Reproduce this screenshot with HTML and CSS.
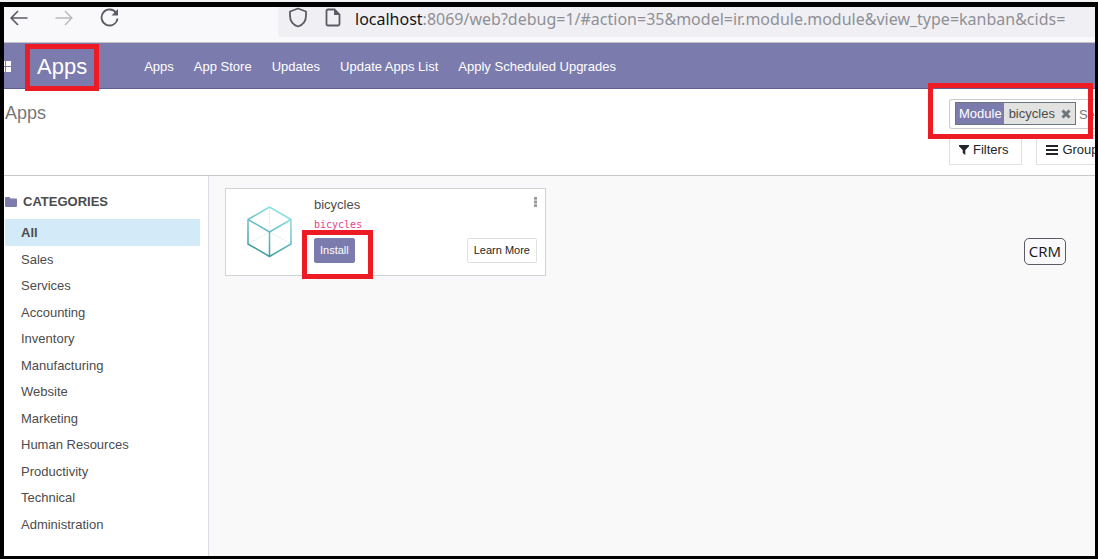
FILE: index.html
```html
<!DOCTYPE html>
<html lang="en">
<head>
<meta charset="utf-8">
<title>Apps</title>
<link rel="stylesheet" href="styles.css">
</head>
<body>
<div class="frame">
  <header class="browser">
    <div class="browser-nav">
      <button class="icon-btn" aria-label="Back"><svg width="18" height="16" viewBox="0 0 18 16"><path d="M17.500 8H1.500M8 1L1.200 8L8 15" fill="none" stroke="#5b5b66" stroke-width="1.700"/></svg></button>
      <button class="icon-btn" aria-label="Forward" disabled><svg width="18" height="16" viewBox="0 0 18 16"><path d="M.5 8H16.500M10 1L16.800 8L10 15" fill="none" stroke="#b9b9be" stroke-width="1.500"/></svg></button>
      <button class="icon-btn reload" aria-label="Reload"><svg width="20" height="20" viewBox="0 0 20 20"><path d="M16.200 5A8 8 0 1 0 17.500 10.500" fill="none" stroke="#5b5b66" stroke-width="1.800"/><path d="M18 1v6.500H11.500z" fill="#5b5b66"/></svg></button>
    </div>
    <div class="address">
      <svg class="shield" width="20" height="21" viewBox="0 0 20 21"><path d="M10 1.500L18 4.500V8.500C18 14 14.500 18 10 19.500C5.500 18 2 14 2 8.500V4.500Z" fill="none" stroke="#5b5b66" stroke-width="1.800" stroke-linejoin="round"/></svg>
      <svg class="doc" width="16" height="19" viewBox="0 0 16 19"><path d="M3 1.500H9.500L14.500 6.500V16Q14.500 17.500 13 17.500H3Q1.500 17.500 1.500 16V3Q1.500 1.500 3 1.500Z" fill="none" stroke="#5b5b66" stroke-width="1.800"/><path d="M9 1V7H15z" fill="#5b5b66"/></svg>
      <span class="url"><b>localhost</b>:8069/web?debug=1/#action=35&amp;model=ir.module.module&amp;view_type=kanban&amp;cids=</span>
    </div>
  </header>

  <nav class="navbar">
    <button class="icon-btn apps-menu" aria-label="Applications"><svg width="8" height="11" viewBox="0 0 8 11"><path d="M0 0H1V5H0zM2 0H7V5H2zM0 6H1V11H0zM2 6H7V11H2z" fill="#fff"/></svg></button>
    <a class="brand" href="#">Apps<span class="mark mark-brand"></span></a>
    <ul class="menu">
      <li><a href="#">Apps</a></li>
      <li><a href="#">App Store</a></li>
      <li><a href="#">Updates</a></li>
      <li><a href="#">Update Apps List</a></li>
      <li><a href="#">Apply Scheduled Upgrades</a></li>
    </ul>
  </nav>

  <section class="control">
    <h1>Apps</h1>
    <div class="tools">
      <div class="search">
        <div class="facet">
          <span class="facet-label">Module</span>
          <span class="facet-value">bicycles</span>
          <button class="icon-btn" aria-label="Remove"><svg width="10" height="10" viewBox="0 0 10 10"><path d="M1.500 1.500L8.500 8.500M8.500 1.500L1.500 8.500" stroke="#6c757d" stroke-width="3"/></svg></button>
        </div>
        <input type="text" placeholder="Search..." aria-label="Search">
        <span class="mark mark-search"></span>
      </div>
      <div class="options">
        <button class="option"><svg width="10" height="10" viewBox="0 0 10 10"><path d="M0 0H10V1.200L6.300 5V10L3.700 8V5L0 1.200z" fill="#212529"/></svg>Filters</button>
        <button class="option"><svg width="12" height="10" viewBox="0 0 12 10"><path d="M0 0H12V2H0zM0 4H12V6H0zM0 8H12V10H0z" fill="#212529"/></svg>Group</button>
      </div>
    </div>
  </section>

  <main class="content">
    <aside class="sidebar">
      <h2><svg width="12" height="10" viewBox="0 0 12 10"><path d="M1 0H4.500L5.500 1.500H11Q12 1.500 12 2.500V9Q12 10 11 10H1Q0 10 0 9V1Q0 0 1 0Z" fill="#7c7bad"/></svg>CATEGORIES</h2>
      <ul class="categories">
        <li class="active"><a href="#">All</a></li>
        <li><a href="#">Sales</a></li>
        <li><a href="#">Services</a></li>
        <li><a href="#">Accounting</a></li>
        <li><a href="#">Inventory</a></li>
        <li><a href="#">Manufacturing</a></li>
        <li><a href="#">Website</a></li>
        <li><a href="#">Marketing</a></li>
        <li><a href="#">Human Resources</a></li>
        <li><a href="#">Productivity</a></li>
        <li><a href="#">Technical</a></li>
        <li><a href="#">Administration</a></li>
      </ul>
    </aside>
    <div class="kanban">
      <article class="card">
        <svg class="cube" width="46" height="52" viewBox="0 0 46 52">
          <defs><linearGradient id="teal" gradientUnits="userSpaceOnUse" x1="34" y1="4" x2="12" y2="48"><stop offset="0" stop-color="#8fe3e8"/><stop offset="1" stop-color="#3f9a9e"/></linearGradient></defs>
          <path d="M22.500 1V26M1 38L22.500 26L44 38" fill="none" stroke="#d9eeee" stroke-width="1" stroke-dasharray="2 1"/>
          <path d="M22.500 1L44 13.500V38L22.500 50.500L1 38V13.500ZM1 13.500L22.500 26L44 13.500M22.500 26V50.500" fill="none" stroke="url(#teal)" stroke-width="1.500" stroke-linejoin="round"/>
        </svg>
        <div class="details">
          <div class="title-row">
            <h3>bicycles</h3>
            <button class="icon-btn" aria-label="More options"><svg width="3" height="10" viewBox="0 0 3 10"><path d="M0 0H3V2.700H0zM0 3.600H3V6.400H0zM0 7.300H3V10H0z" fill="#999"/></svg></button>
          </div>
          <code>bicycles</code>
          <div class="actions">
            <button class="btn primary">Install<span class="mark mark-install"></span></button>
            <button class="btn">Learn More</button>
          </div>
        </div>
      </article>
      <span class="tag">CRM</span>
    </div>
  </main>
</div>
</body>
</html>
```
FILE: styles.css
```css
* { box-sizing: border-box; }

body {
  margin: 0;
  padding-top: 2px;
  background: #f4f4f7;
  color: #4c4c4c;
  font: 13px/1.5 "Liberation Sans", Arial, sans-serif;
}

a { color: inherit; text-decoration: none; }
ul { list-style: none; margin: 0; padding: 0; }
h1, h2, h3 { margin: 0; }
button, input { font: inherit; }
svg { display: block; flex: none; }

.frame {
  display: flex;
  flex-direction: column;
  min-height: calc(100vh - 2px);
  border: solid #000;
  border-width: 5px 3px 3px 4px;
  overflow: hidden;
  background: #fff;
}

.icon-btn { padding: 0; border: 0; background: none; }

.browser {
  display: flex;
  align-items: flex-start;
  height: 36px;
  background: #f9f9fb;
  border-bottom: 1px solid #c4c4c8;
}
.browser-nav {
  display: flex;
  align-items: center;
  gap: 27px;
  width: 274px;
  padding: 1px 6px;
}
.address {
  display: flex;
  flex: 1;
  min-width: 0;
  height: 30px;
  padding-left: 10px;
  background: #f0f0f4;
  border-radius: 0 0 0 4px;
}
.doc { margin: 1px 14px 0 17px; }
.url {
  color: #8f8f96;
  font: 16px/24px "Noto Sans", "Open Sans", sans-serif;
  white-space: nowrap;
}
.url b { color: #15141a; font-weight: 400; }

.navbar {
  display: flex;
  align-items: center;
  height: 46px;
  padding-top: 2px;
  background: #7c7bad;
  border-bottom: 1px solid #5f5e97;
  color: #fff;
}
.brand {
  position: relative;
  margin: 0 57px 0 25px;
  font-size: 22px;
}
.menu { display: flex; gap: 20px; white-space: nowrap; }

.mark {
  position: absolute;
  z-index: 1;
  border: 5px solid #ed1c24;
  pointer-events: none;
}
.mark-brand { inset: -6px -12px -8px; }
.mark-search { inset: -17px 2px -11px -22px; }
.mark-install { inset: -9px -19px -17px -13px; }

.control {
  display: flex;
  justify-content: space-between;
  height: 87px;
  border-bottom: 1px solid #c8c8cc;
}
.control h1 {
  padding: 11px 1px;
  color: #777;
  font-size: 18px;
  font-weight: 400;
}
.tools { width: 146px; padding-top: 10px; }
.search {
  position: relative;
  display: flex;
  align-items: flex-start;
  height: 30px;
  padding: 2px 0 0 5px;
  border: 1px solid #ccc;
  border-right: 0;
  border-radius: 3px 0 0 3px;
}
.facet {
  display: flex;
  align-items: center;
  height: 23px;
  border: 1px solid #6c757d;
  background: #e2e2e0;
  line-height: 21px;
}
.facet-label { padding: 0 2px 0 3px; background: #7c7bad; color: #fff; }
.facet-value { padding: 0 6px 0 5px; }
.facet .icon-btn { padding-right: 4px; }
.search input {
  flex: 1;
  min-width: 0;
  height: 24px;
  padding: 0 0 0 3px;
  border: 0;
  background: none;
  outline: 0;
}
.search input::placeholder { color: #777; }
.options { display: flex; gap: 14px; margin-top: 6px; }
.option {
  display: flex;
  align-items: center;
  gap: 4px;
  height: 30px;
  padding: 0 13px 0 9px;
  border: 1px solid #dee2e6;
  background: #fff;
  color: #212529;
  white-space: nowrap;
}

.content { display: flex; flex: 1; }
.sidebar {
  flex: none;
  width: 205px;
  padding: 16px 8px 0 1px;
  border-right: 1px solid #dcdde5;
}
.sidebar h2 {
  display: flex;
  align-items: center;
  gap: 6px;
  margin-bottom: 8px;
  font-size: 13px;
  line-height: 19px;
}
.categories a { display: block; padding: 4px 16px 3px; }
.active { background: #d3ebf8; font-weight: 700; }

.kanban {
  display: flex;
  flex: 1;
  align-items: flex-start;
  justify-content: space-between;
  padding: 12px 29px 0 16px;
  background: #f9f9f9;
}
.card {
  display: flex;
  gap: 21px;
  width: 321px;
  padding: 5px 8px 12px 21px;
  border: 1px solid #ced4da;
  background: #fff;
}
.cube { margin-top: 12px; }
.details { flex: 1; }
.title-row { display: flex; justify-content: space-between; align-items: center; }
.title-row h3 { font-size: 13px; font-weight: 400; line-height: 21px; }
.title-row .icon-btn { margin-top: -5px; }
.details code {
  display: block;
  color: #e83e8c;
  font: 10px/20px "DejaVu Sans Mono", monospace;
}
.actions { display: flex; justify-content: space-between; margin-top: 3px; }
.btn {
  position: relative;
  height: 25px;
  padding: 0 6px;
  border: 1px solid #dee2e6;
  border-radius: 2px;
  background: #fff;
  color: #212529;
  font-size: 11px;
}
.primary { padding: 0 5px; border-color: #7c7bad; background: #7c7bad; color: #fff; }
.tag {
  margin-top: 50px;
  padding: 0 4px;
  border: 1px solid #5b5b66;
  border-radius: 5px;
  background: #f9f9fb;
  color: #15141a;
  font: 15px/25px "Open Sans", "Noto Sans", sans-serif;
}
```
